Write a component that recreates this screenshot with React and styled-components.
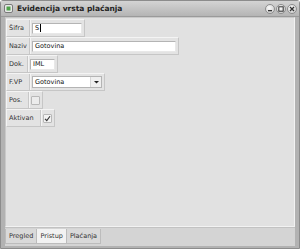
import React from 'react';
import styled, { createGlobalStyle } from 'styled-components';

const Global = createGlobalStyle`
  html, body { margin: 0; padding: 0; overflow: hidden; background: #ffffff; }
  body { font-family: "DejaVu Sans", "Liberation Sans", sans-serif; }
`;

const Window = styled.div`
  width: 300px;
  height: 249px;
  box-sizing: border-box;
  border: 1px solid #8c8c8c;
  border-radius: 3px 3px 0 0;
  background: #a9a9a9;
  display: flex;
  flex-direction: column;
`;

const TitleBar = styled.div`
  height: 15px;
  display: flex;
  align-items: center;
  padding: 0 2px 0 3px;
  background: linear-gradient(#d4d4d4, #b4b4b4);
  border-bottom: 1px solid #9a9a9a;
  gap: 4px;
`;

const Title = styled.span`
  flex: 1;
  font-size: 7.5px;
  font-weight: bold;
  color: #222;
`;

const WinButtons = styled.div`
  display: flex;
  gap: 1px;
`;

const WinButton = styled.div`
  width: 10px;
  height: 10px;
  border-radius: 50%;
  border: 1px solid #8e8e8e;
  box-sizing: border-box;
  background: radial-gradient(circle at 40% 35%, #fafafa, #c4c4c4);
  display: flex;
  align-items: center;
  justify-content: center;
`;

const Frame = styled.div`
  flex: 1;
  display: flex;
  flex-direction: column;
  padding: 0 4px 2px 4px;
  background: #b2b2b2;
`;

const Panel = styled.div`
  flex: 1;
  background: #e1e1e1;
  border: 1px solid #c9c9c9;
  border-right-color: #f2f2f2;
  border-bottom-color: #f2f2f2;
  display: flex;
  flex-direction: column;
  align-items: flex-start;
  padding-top: 1px;
`;

const Row = styled.div`
  display: flex;
  align-items: stretch;
  height: 16px;
  border: 1px solid #f4f4f4;
  border-right-color: #c6c6c6;
  border-bottom-color: #c6c6c6;
  background: #e3e3e3;
`;

const Label = styled.div`
  width: ${p => p.w}px;
  display: flex;
  align-items: center;
  padding-left: 2px;
  font-size: 6.5px;
  color: #333;
  border-right: 1px solid #c8c8c8;
  box-shadow: 1px 0 0 #f4f4f4;
`;

const Field = styled.div`
  display: flex;
  align-items: center;
  padding: 0 2px 0 2px;
`;

const Input = styled.div`
  width: ${p => p.w}px;
  height: 11px;
  box-sizing: border-box;
  background: #ffffff;
  border: 1px solid #b4b4b4;
  border-right-color: #e8e8e8;
  border-bottom-color: #e8e8e8;
  font-size: 6.5px;
  color: #111;
  display: flex;
  align-items: center;
  padding-left: 2px;
`;

const Caret = styled.span`
  display: inline-block;
  width: 1px;
  height: 8px;
  background: #000;
  margin-left: 1px;
`;

const Select = styled.div`
  width: 70px;
  height: 12px;
  box-sizing: border-box;
  background: #ffffff;
  border: 1px solid #b4b4b4;
  display: flex;
  align-items: center;
  font-size: 6.5px;
  color: #111;
`;

const SelectText = styled.span`
  flex: 1;
  padding-left: 2px;
`;

const SelectArrow = styled.div`
  width: 10px;
  height: 100%;
  border-left: 1px solid #d6d6d6;
  background: #efefef;
  display: flex;
  align-items: center;
  justify-content: center;
`;

const Check = styled.div`
  width: 9px;
  height: 9px;
  box-sizing: border-box;
  border: 1px solid #b8b8b8;
  background: ${p => (p.disabled ? '#ececec' : '#f2f2f2')};
  border-radius: 1px;
  display: flex;
  align-items: center;
  justify-content: center;
`;

const TabBar = styled.div`
  height: 17px;
  display: flex;
  align-items: flex-start;
  background: #d4d4d4;
  border-top: 1px solid #c2c2c2;
  padding-top: 1px;
`;

const Tab = styled.div`
  height: 14px;
  padding: 0 3px;
  display: flex;
  align-items: center;
  font-size: 6.5px;
  color: #333;
  background: ${p => (p.active ? '#f2f2f2' : '#d9d9d9')};
  border: 1px solid #bcbcbc;
  border-top: none;
  margin-right: -1px;
`;

const rows = [
  { label: 'Šifra', lw: 20, kind: 'input', value: 'S', w: 50, caret: true },
  { label: 'Naziv', lw: 20, kind: 'input', value: 'Gotovina', w: 144 },
  { label: 'Dok.', lw: 18, kind: 'input', value: 'IML', w: 25 },
  { label: 'F.VP', lw: 20, kind: 'select', value: 'Gotovina' },
  { label: 'Pos.', lw: 19, kind: 'check', disabled: true },
  { label: 'Aktivan', lw: 31, kind: 'check', checked: true },
];

const AppIcon = () => (
  <svg width="9" height="9" viewBox="0 0 9 9">
    <rect x="0.5" y="0.5" width="8" height="8" rx="1.5" fill="#e8e8e8" stroke="#7a7a7a" />
    <rect x="2.5" y="2.5" width="4" height="4" fill="#4fa34a" />
  </svg>
);

export default function App() {
  return (
    <>
      <Global />
      <Window>
        <TitleBar>
          <AppIcon />
          <Title>Evidencija vrsta plaćanja</Title>
          <WinButtons>
            <WinButton>
              <svg width="6" height="6" viewBox="0 0 6 6"><rect x="1" y="4" width="4" height="1.3" fill="#333" /></svg>
            </WinButton>
            <WinButton>
              <svg width="6" height="6" viewBox="0 0 6 6"><rect x="0.8" y="0.8" width="4.4" height="4.4" fill="none" stroke="#333" strokeWidth="1" /></svg>
            </WinButton>
            <WinButton>
              <svg width="6" height="6" viewBox="0 0 6 6"><path d="M1 1 L5 5 M5 1 L1 5" stroke="#333" strokeWidth="1.3" /></svg>
            </WinButton>
          </WinButtons>
        </TitleBar>
        <Frame>
          <Panel>
            {rows.map(r => (
              <Row key={r.label}>
                <Label w={r.lw}>{r.label}</Label>
                <Field>
                  {r.kind === 'input' && (
                    <Input w={r.w}>
                      {r.value}
                      {r.caret && <Caret />}
                    </Input>
                  )}
                  {r.kind === 'select' && (
                    <Select>
                      <SelectText>{r.value}</SelectText>
                      <SelectArrow>
                        <svg width="5" height="4" viewBox="0 0 5 4"><path d="M0 1 L5 1 L2.5 3.5 Z" fill="#222" /></svg>
                      </SelectArrow>
                    </Select>
                  )}
                  {r.kind === 'check' && (
                    <Check disabled={r.disabled}>
                      {r.checked && (
                        <svg width="7" height="7" viewBox="0 0 7 7"><path d="M1 3.8 L2.8 5.6 L6 1.2" fill="none" stroke="#333" strokeWidth="1.1" /></svg>
                      )}
                    </Check>
                  )}
                </Field>
              </Row>
            ))}
          </Panel>
          <TabBar>
            <Tab>Pregled</Tab>
            <Tab active>Pristup</Tab>
            <Tab>Plaćanja</Tab>
          </TabBar>
        </Frame>
      </Window>
    </>
  );
}
